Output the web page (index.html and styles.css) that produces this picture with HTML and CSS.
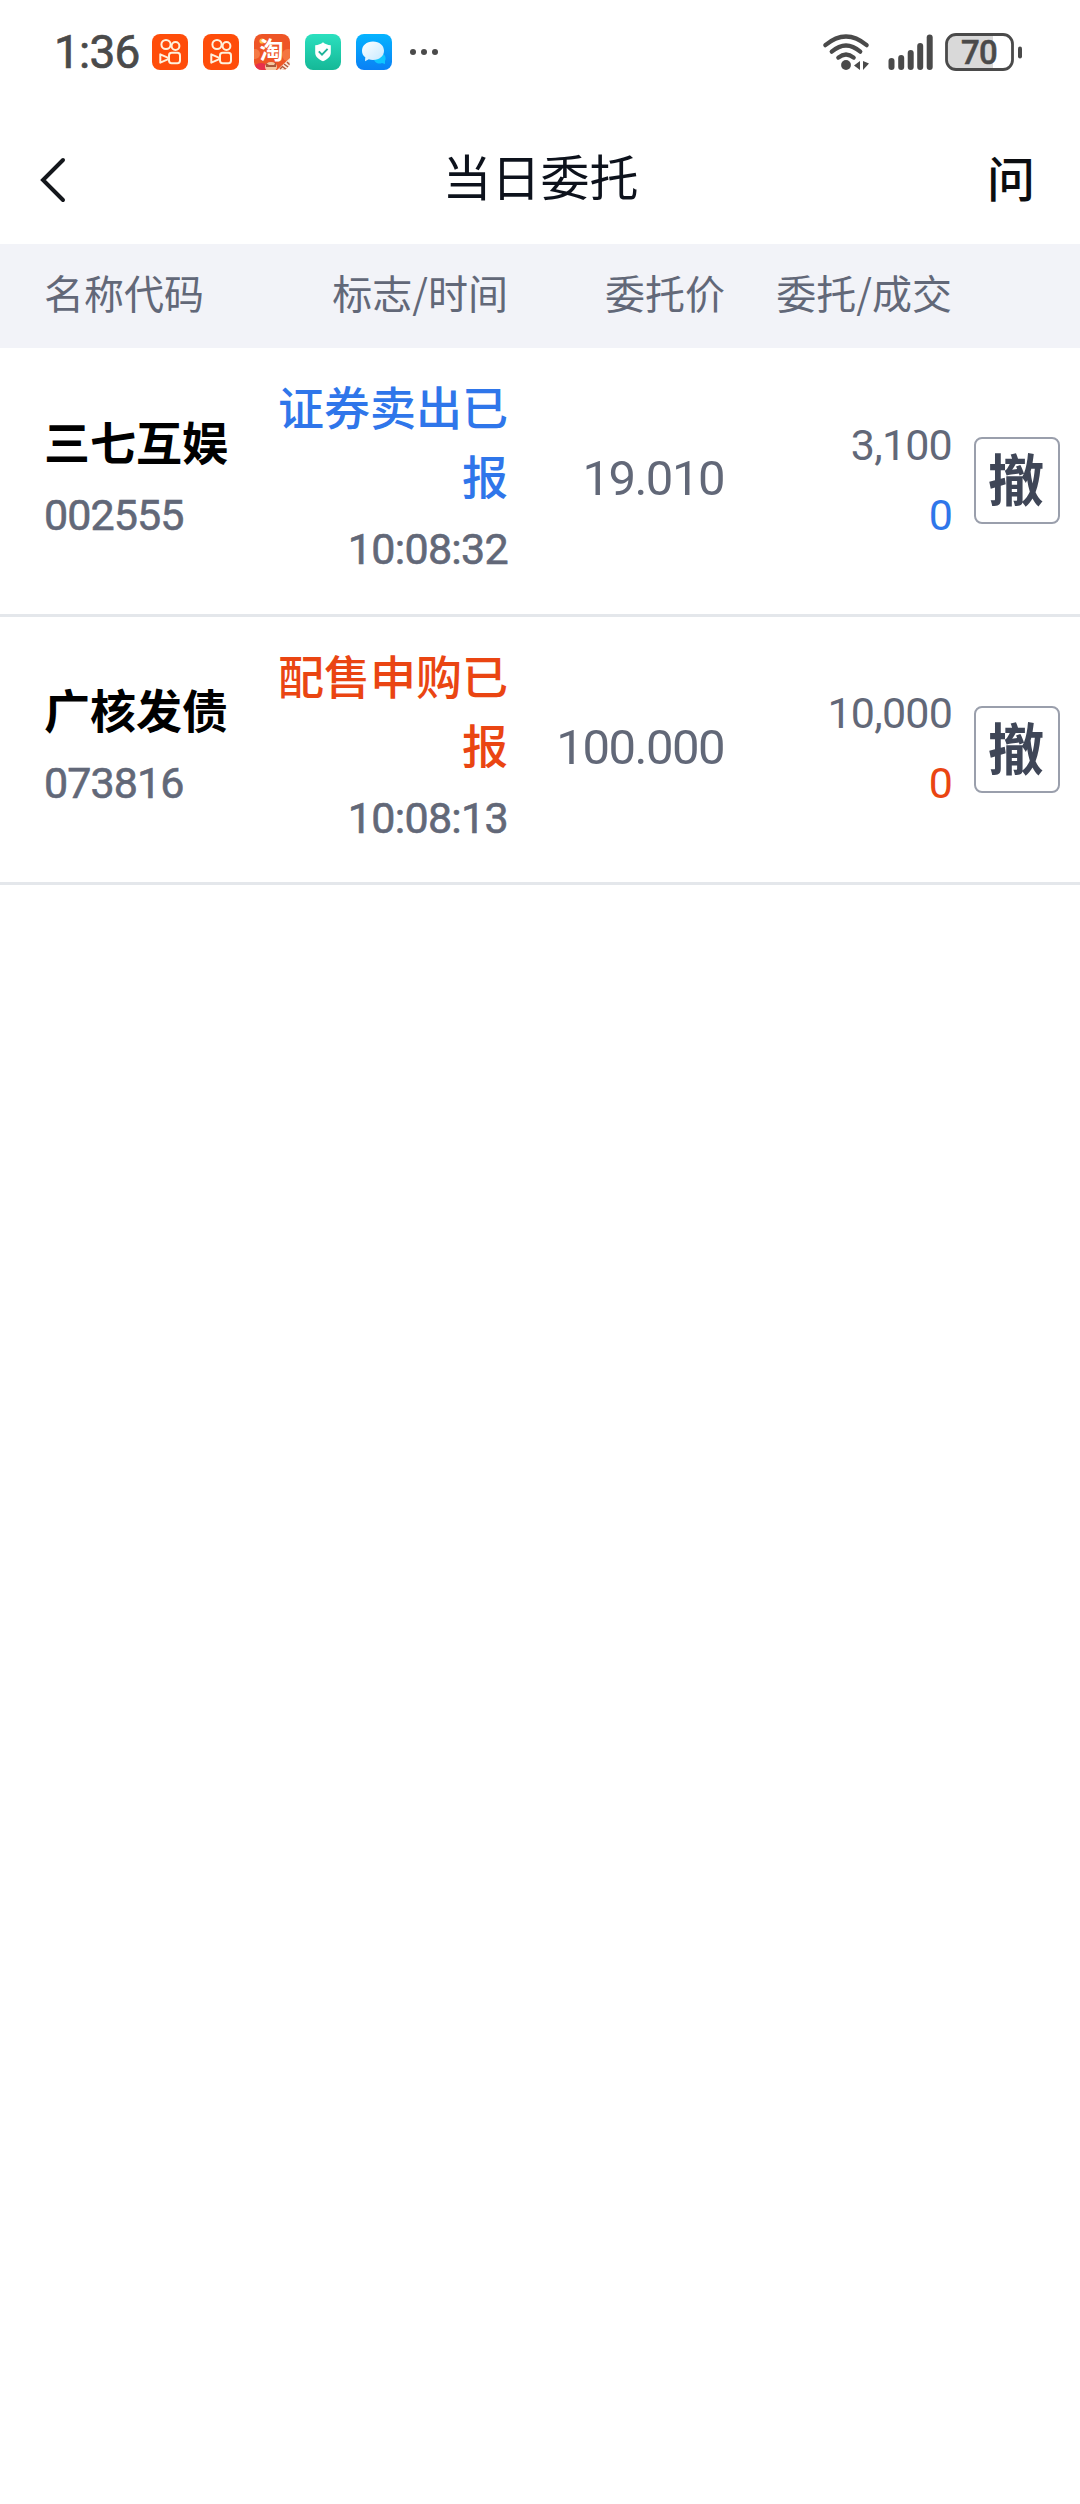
FILE: index.html
```
<!DOCTYPE html>
<html lang="zh-CN">
<head>
    <meta charset="UTF-8">
    <title>当日委托</title>
    <link rel="stylesheet" href="styles.css">
</head>
<body>

    <div class="status-bar">
        <div class="status-left">
            <span class="clock">1:36</span>
            <svg class="app-icon" viewBox="0 0 36 36">
                <rect width="36" height="36" rx="8" fill="#ff4d0a"/>
                <g fill="none" stroke="#fff1dc" stroke-width="2" stroke-linejoin="round">
                    <circle cx="14" cy="10.500" r="4.600"/>
                    <circle cx="23.500" cy="12" r="3.900"/>
                    <rect x="17" y="18.800" width="11" height="10.400" rx="2.600"/>
                    <path d="M8.300 20.300l8 3.500v1.400l-8 3.500z"/>
                </g>
            </svg>
            <svg class="app-icon" viewBox="0 0 36 36">
                <rect width="36" height="36" rx="8" fill="#ff4d0a"/>
                <g fill="none" stroke="#fff1dc" stroke-width="2" stroke-linejoin="round">
                    <circle cx="14" cy="10.500" r="4.600"/>
                    <circle cx="23.500" cy="12" r="3.900"/>
                    <rect x="17" y="18.800" width="11" height="10.400" rx="2.600"/>
                    <path d="M8.300 20.300l8 3.500v1.400l-8 3.500z"/>
                </g>
            </svg>
            <svg class="app-icon" viewBox="0 0 36 36">
                <defs>
                    <clipPath id="tb"><rect width="36" height="36" rx="8"/></clipPath>
                </defs>
                <g clip-path="url(#tb)">
                    <rect width="36" height="36" fill="#ee5526"/>
                    <circle cx="1" cy="20" r="5" fill="#f57a45"/>
                    <circle cx="34" cy="21" r="6" fill="#f4763f"/>
                    <circle cx="8" cy="7" r="2.600" fill="#ffc24a"/>
                    <ellipse cx="7" cy="33" rx="6" ry="4" fill="#e8304a"/>
                    <ellipse cx="17" cy="33" rx="6" ry="5" fill="#f3c7a0"/>
                    <path d="M12 29l3 2h5l2-3v5H12z" fill="#a8593a"/>
                    <path d="M23 36L36 24v12z" fill="#fbe9dc"/>
                    <path d="M26 35l3-3M29 33l4 3M30 30l4 3M33 28l3 3" stroke="#b5573a" stroke-width="1.500"/>
                </g>
                <text class="tb-text" x="5.500" y="25">淘</text>
            </svg>
            <svg class="app-icon" viewBox="0 0 36 36">
                <defs>
                    <linearGradient id="green" x1="0" y1="0" x2="0" y2="1">
                        <stop offset="0" stop-color="#2be0bf"/>
                        <stop offset="1" stop-color="#15b897"/>
                    </linearGradient>
                </defs>
                <rect width="36" height="36" rx="8" fill="url(#green)"/>
                <path d="M18 8.300c2 1.700 4.700 2.700 7.800 3v7.200c0 4-2.800 6.600-7.800 8.800-5-2.200-7.800-4.800-7.800-8.800v-7.200c3.100-.3 5.800-1.300 7.800-3z" fill="#fff"/>
                <path d="M13.800 17.400l3.200 3.300 5.600-5.900" fill="none" stroke="#1fb398" stroke-width="1.900"/>
            </svg>
            <svg class="app-icon" viewBox="0 0 36 36">
                <defs>
                    <linearGradient id="blue" x1="0" y1="0" x2="0" y2="1">
                        <stop offset="0" stop-color="#05b4ff"/>
                        <stop offset="1" stop-color="#0a80f5"/>
                    </linearGradient>
                    <linearGradient id="bubble" x1="0" y1="0" x2="1" y2="1">
                        <stop offset="0" stop-color="#fff"/>
                        <stop offset="1" stop-color="#c5e9ff"/>
                    </linearGradient>
                </defs>
                <rect width="36" height="36" rx="8" fill="url(#blue)"/>
                <path d="M24 19a5.500 5.500 0 0 1 5 8v3l-3-1a6 6 0 0 1-8-3z" fill="#0fc6ff"/>
                <path d="M17 7.500c6.500 0 11 4 11 9.300S23.500 26 17 26c-1.500 0-3-.2-4.200-.7L9 27.300l.3-4C7 21.600 6 19.500 6 16.800c0-5.300 4.500-9.300 11-9.300z" fill="url(#bubble)"/>
            </svg>
            <svg class="more" viewBox="0 0 28 6">
                <g fill="#4a4a4a">
                    <circle cx="3" cy="3" r="3"/>
                    <circle cx="14" cy="3" r="3"/>
                    <circle cx="25" cy="3" r="3"/>
                </g>
            </svg>
        </div>
        <div class="status-right">
            <svg class="wifi" viewBox="0 0 46 36">
                <g fill="none" stroke="#4a4a4a" stroke-width="4.200" stroke-linecap="round">
                    <path d="M2.300 11.200Q23-6.200 43.700 11.200"/>
                    <path d="M8.700 17.700Q23 5.300 37.300 17.700"/>
                    <path d="M15.300 23.600Q23 17.400 30.700 23.600"/>
                </g>
                <circle cx="23" cy="31" r="4.900" fill="#4a4a4a"/>
                <path d="M37 27v9l-6-4.500zM40 27v9l6-6.500z" fill="#4a4a4a"/>
            </svg>
            <svg class="signal" viewBox="0 0 46 36">
                <g fill="#4a4a4a">
                    <rect x="0.500" y="24" width="6" height="12" rx="3"/>
                    <rect x="10.200" y="21" width="6" height="15" rx="3"/>
                    <rect x="19.700" y="16" width="6" height="20" rx="3"/>
                    <rect x="29.200" y="9" width="6" height="27" rx="3"/>
                    <rect x="38.700" y="0.500" width="6" height="35.500" rx="3"/>
                </g>
            </svg>
            <svg class="battery" viewBox="0 0 78 38">
                <path d="M11 1.500h37v35H11a9 9 0 0 1-9-9v-17a9 9 0 0 1 9-9z" fill="#d9d9d9"/>
                <rect x="1.500" y="1.500" width="66" height="35" rx="9.500" fill="none" stroke="#4a4a4a" stroke-width="2.800"/>
                <rect x="73" y="13.500" width="4" height="12" rx="2" fill="#4a4a4a"/>
                <text class="battery-text" x="34" y="31" text-anchor="middle">70</text>
            </svg>
        </div>
    </div>

    <div class="nav">
        <svg class="back" viewBox="0 0 26 46">
            <path d="M23 3L3 23l20 20" fill="none" stroke="#14171c" stroke-width="4" stroke-linecap="round"/>
        </svg>
        <h1 class="title">当日委托</h1>
        <span class="ask">问</span>
    </div>

    <div class="grid table-head">
        <span>名称代码</span>
        <span class="right">标志/时间</span>
        <span class="right">委托价</span>
        <span class="right">委托/成交</span>
    </div>

    <div class="orders">
        <div class="grid order sell">
            <div class="stock">
                <div class="name">三七互娱</div>
                <div class="code">002555</div>
            </div>
            <div class="right state">
                <div class="flag">证券卖出已报</div>
                <div class="time">10:08:32</div>
            </div>
            <div class="right price">19.010</div>
            <div class="right amount">
                <div>3,100</div>
                <div class="done">0</div>
            </div>
            <button class="cancel">撤</button>
        </div>
        <div class="grid order buy">
            <div class="stock">
                <div class="name">广核发债</div>
                <div class="code">073816</div>
            </div>
            <div class="right state">
                <div class="flag">配售申购已报</div>
                <div class="time">10:08:13</div>
            </div>
            <div class="right price">100.000</div>
            <div class="right amount">
                <div>10,000</div>
                <div class="done">0</div>
            </div>
            <button class="cancel">撤</button>
        </div>
    </div>

</body>
</html>
```
FILE: styles.css
```
body {
    margin: 0;
    background-color: #fff;
    font-family: "Noto Sans CJK SC", sans-serif;
    color: #626878;
}

svg {
    display: block;
    overflow: visible;
}

.status-bar {
    display: flex;
    justify-content: space-between;
    align-items: center;
    height: 103px;
    padding: 0 57px 0 54px;
}

.status-left,
.status-right {
    display: flex;
    align-items: center;
}

.status-left {
    gap: 15px;
}

.clock {
    width: 83px;
    font-family: Roboto, sans-serif;
    font-size: 46px;
    line-height: 54px;
    letter-spacing: -0.800px;
    color: #4a4a4a;
    -webkit-text-stroke: 0.700px #4a4a4a;
}

.app-icon {
    width: 36px;
    height: 36px;
}

.tb-text {
    font-size: 24px;
    font-weight: 700;
    fill: #fff;
}

.more {
    width: 28px;
    height: 6px;
    margin-left: 3px;
}

.wifi {
    width: 46px;
    height: 36px;
    margin-right: 19px;
}

.signal {
    width: 46px;
    height: 36px;
    margin-right: 11px;
}

.battery {
    width: 78px;
    height: 38px;
}

.battery-text {
    font-family: Roboto, sans-serif;
    font-size: 33px;
    font-weight: 500;
    letter-spacing: -0.800px;
    fill: #4a4a4a;
    stroke: #4a4a4a;
    stroke-width: 0.500px;
}

.nav {
    display: flex;
    justify-content: space-between;
    align-items: center;
    height: 128px;
    padding: 13px 45px 0 40px;
}

.back {
    width: 26px;
    height: 46px;
}

.title {
    margin: 0 0 10px 28px;
    font-size: 49px;
    font-weight: 400;
    line-height: 72px;
    color: #0d121c;
}

.ask {
    margin-bottom: 8px;
    font-size: 48px;
    font-weight: 500;
    line-height: 72px;
    color: #0b0d10;
}

.grid {
    display: grid;
    grid-template-columns: 228px 236px 217px 227px 86px;
    padding-left: 44px;
}

.right {
    text-align: right;
}

.table-head {
    align-items: center;
    height: 95px;
    padding-bottom: 9px;
    background-color: #f2f3f8;
    font-size: 40px;
}

.order {
    align-items: center;
    box-sizing: border-box;
    height: 268.500px;
    border-bottom: 3px solid #e4e7eb;
    line-height: 69px;
}

.stock {
    padding-bottom: 6px;
}

.name {
    margin-bottom: 6px;
    font-size: 46px;
    font-weight: 700;
    color: #000;
}

.state {
    padding-bottom: 6px;
}

.flag {
    margin-bottom: 6px;
    font-size: 46px;
    font-weight: 500;
}

.code,
.time {
    font-family: Roboto, sans-serif;
    font-size: 43px;
    letter-spacing: -0.900px;
    -webkit-text-stroke: 0.600px #626878;
}

.time {
    letter-spacing: -0.700px;
}

.price {
    padding: 0 1px 4px 0;
    font-family: Roboto, sans-serif;
    font-size: 49px;
    letter-spacing: -1.500px;
}

.amount {
    padding-bottom: 2px;
    font-family: Roboto, sans-serif;
    font-size: 43px;
    line-height: 70px;
    letter-spacing: -0.800px;
}

.sell .flag,
.sell .done {
    color: #2f76ea;
}

.buy .flag,
.buy .done {
    color: #ea4512;
}

.cancel {
    box-sizing: border-box;
    width: 86px;
    height: 87px;
    margin-left: 22px;
    padding: 0 2px 7px 0;
    border: 2px solid #9a9fac;
    border-radius: 8px;
    background-color: #fff;
    font-family: inherit;
    font-size: 56px;
    font-weight: 700;
    line-height: 76px;
    color: #3f4657;
}
```
